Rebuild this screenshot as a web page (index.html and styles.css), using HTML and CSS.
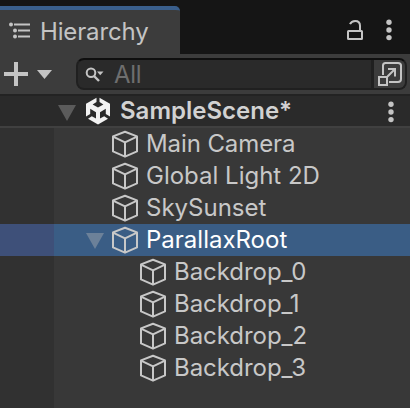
FILE: index.html
```html
<!DOCTYPE html>
<html lang="en">
<head>
<meta charset="utf-8">
<title>Hierarchy</title>
<link rel="stylesheet" href="styles.css">
</head>
<body>
<svg width="0" height="0" class="defs">
  <symbol id="cube" viewBox="0 0 28 28">
    <path d="M14 1.7 26 6.4V21.4L14 26.7 2 21.4V6.4ZM2 6.6 14 12.4 26 6.6M14 12.4V26.5" fill="none" stroke="currentColor" stroke-width="2" stroke-linejoin="round"/>
  </symbol>
  <symbol id="dots" viewBox="0 0 6 22">
    <circle cx="3" cy="3.3" r="2.7"/><circle cx="3" cy="11" r="2.7"/><circle cx="3" cy="18.6" r="2.7"/>
  </symbol>
</svg>
<div class="panel">
  <header class="tabbar">
    <div class="tab">
      <svg class="list-icon" width="22" height="18" viewBox="0 0 22 18" fill="currentColor"><circle cx="2" cy="2.5" r="2"/><circle cx="6" cy="8.5" r="2"/><circle cx="6" cy="14.5" r="2"/><path d="M5 1.5h16v2H5zM9 7.5h12v2H9zM9 13.5h12v2H9z"/></svg>
      <span class="tab-title">Hierarchy</span>
    </div>
    <svg class="lock" width="18" height="22" viewBox="0 0 18 22" fill="none" stroke="currentColor" stroke-width="2"><rect x="2" y="12" width="14" height="8" rx=".5"/><path d="M4 5.2C5 2.9 7 2 9.2 2 12.400 2 14 3.900 14 6.800V12"/></svg>
    <svg class="dots tab-dots" width="6" height="22"><use href="#dots"/></svg>
  </header>
  <div class="toolbar">
    <svg class="plus" width="24" height="24" viewBox="0 0 24 24"><path d="M10 0h4v10h10v4H14v10h-4V14H0v-4h10z" fill="currentColor"/></svg>
    <svg class="caret" width="15" height="9" viewBox="0 0 15 9"><path d="M0 0h15L7.500 9z" fill="currentColor"/></svg>
    <div class="search">
      <div class="field">
        <svg class="glass" width="20" height="16" viewBox="0 0 20 16"><circle cx="6" cy="5.800" r="4.300" fill="none" stroke="currentColor" stroke-width="2"/><path d="m9 9 5 5" stroke="currentColor" stroke-width="2.400"/><path d="M12 4.500h6.500L15.200 8.200z" fill="currentColor"/></svg>
        <span class="placeholder">All</span>
      </div>
      <div class="open">
        <svg width="26" height="26" viewBox="0 0 26 26" fill="none" stroke="currentColor" stroke-width="2"><path d="M6 14V4.500Q6 2 8.500 2H21Q24 2 24 4.500V18Q24 21 21 21H12"/><rect x="2" y="16" width="8" height="8"/><path d="M10.500 15.500 18 8M11 8h7v7.500"/></svg>
      </div>
    </div>
  </div>
  <div class="scene">
    <svg class="fold" width="18" height="16" viewBox="0 0 18 16"><path d="M0 0h18L9 16z" fill="currentColor"/></svg>
    <svg class="unity" width="26" height="28" viewBox="0 0 26 28">
      <path d="M11.500.700V5L7.600 7.400 13 10.600 18.400 7.400 14.500 5V.700L25 6.800V19.600L20.800 17V11.700L15 15.200V21.600L19.200 19.200 23 21.700 13 27.500 3 21.700 6.800 19.200 11 21.600V15.200L5.200 11.700V17L1 19.600V6.800Z" fill="#f2f2f2"/>
    </svg>
    <span class="scene-name">SampleScene*</span>
    <svg class="dots scene-dots" width="6" height="22"><use href="#dots"/></svg>
  </div>
  <main class="tree">
    <div class="row"><svg class="cube" width="28" height="28"><use href="#cube"/></svg><span class="tight">Main Camera</span></div>
    <div class="row"><svg class="cube" width="28" height="28"><use href="#cube"/></svg><span>Global Light 2D</span></div>
    <div class="row"><svg class="cube" width="28" height="28"><use href="#cube"/></svg><span>SkySunset</span></div>
    <div class="row selected"><svg class="fold" width="18" height="16" viewBox="0 0 18 16"><path d="M0 0h18L9 16z" fill="currentColor"/></svg><svg class="cube" width="28" height="28"><use href="#cube"/></svg><span>ParallaxRoot</span></div>
    <div class="row child"><svg class="cube" width="28" height="28"><use href="#cube"/></svg><span>Backdrop_0</span></div>
    <div class="row child"><svg class="cube" width="28" height="28"><use href="#cube"/></svg><span>Backdrop_1</span></div>
    <div class="row child"><svg class="cube" width="28" height="28"><use href="#cube"/></svg><span>Backdrop_2</span></div>
    <div class="row child"><svg class="cube" width="28" height="28"><use href="#cube"/></svg><span>Backdrop_3</span></div>
  </main>
</div>
</body>
</html>
```
FILE: styles.css
```css
* { box-sizing: border-box; }
body { margin: 0; background: #383838; font: 24px/32px Inter, sans-serif; color: #c8c8c8; }
svg { display: block; flex: none; }
.defs { position: absolute; }
.panel { width: 410px; height: 408px; display: flex; flex-direction: column; overflow: hidden; }
.tabbar { height: 54px; flex: none; background: #151515; display: flex; padding-top: 6px; color: #c4c4c4; }
.tab { width: 180px; height: 48px; background: #3c3c3c; border-top: 4px solid #3a5f8c; border-radius: 0 5px 0 0; display: flex; padding-left: 9px; }
.list-icon { margin-top: 12px; }
.tab-title { margin: 6px 0 0 9px; letter-spacing: -.15px; }
.lock { margin: 13px 0 0 166px; }
.dots { fill: #c4c4c4; }
.tab-dots { margin: 13px 0 0 22px; }
.toolbar { height: 42px; flex: none; background: #3c3c3c; border-bottom: 2px solid #232323; display: flex; padding: 4px 3px 4px 4px; color: #c4c4c4; }
.plus { margin-top: 4px; }
.caret { margin: 12px 0 0 9px; }
.search { flex: 1; margin-left: 24px; height: 32px; border: 2px solid #202020; border-top-color: #0f0f0f; border-radius: 8px; background: #2a2a2a; display: flex; overflow: hidden; }
.field { flex: 1; display: flex; border-right: 3px solid #202020; padding-left: 7px; }
.glass { margin-top: 7px; }
.placeholder { margin: -1px 0 0 9px; color: #6e6e6e; letter-spacing: -.3px; }
.open { width: 31px; flex: none; background: #3c3c3c; padding: 1px 0 0 3px; }
.scene { height: 32px; flex: none; background: #2a2a2a; border-bottom: 2px solid #404040; display: flex; padding-left: 58px; }
.fold { color: #5b5b5b; }
.scene .fold { margin-top: 9px; }
.unity { margin: 1px 0 0 9px; }
.scene-name { margin: -1px 0 0 9px; font-weight: 600; color: #d2d2d2; white-space: nowrap; }
.scene-dots { margin: 5px 16px 0 auto; }
.tree { flex: 1; background: linear-gradient(90deg, #313131 54px, #383838 54px); }
.row { height: 32px; display: flex; padding-left: 111px; white-space: nowrap; }
.row span { margin: 0 0 0 7px; }
.tight { letter-spacing: -.1px; }
.cube { margin-top: 2px; }
.child { padding-left: 139px; }
.child span { letter-spacing: -.05px; }
.selected { padding-left: 86px; background: linear-gradient(90deg, #3e5079 54px, #3a5d85 54px); color: #fff; }
.selected .fold { margin: 9px 7px 0 0; color: #6c8199; }
.selected .cube { color: #c8c8c8; }
```
